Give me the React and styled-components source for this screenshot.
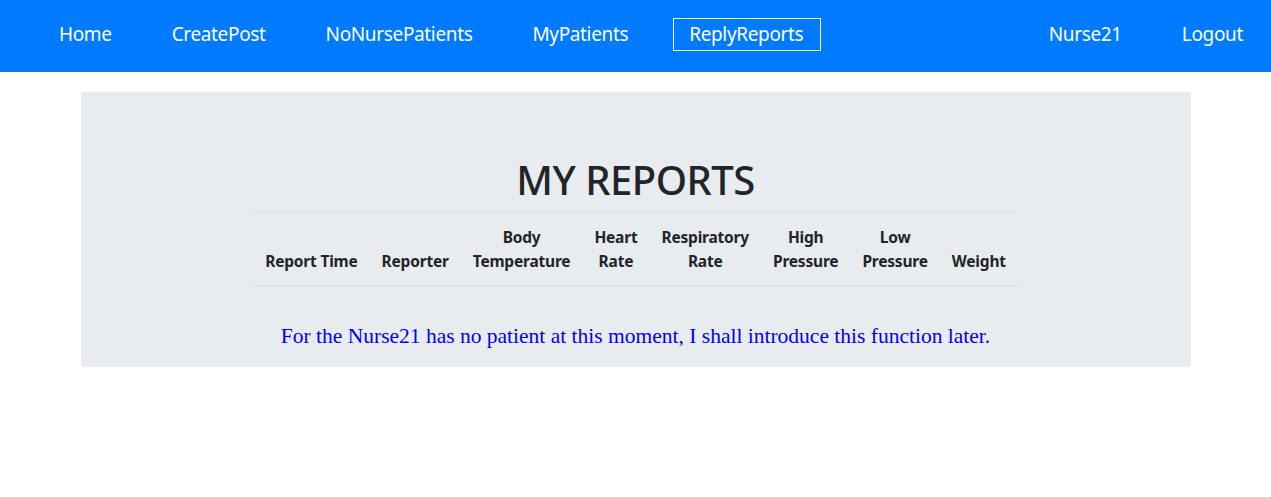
import React from "react";
import styled, { createGlobalStyle } from "styled-components";

const Global = createGlobalStyle`
  * { box-sizing: border-box; }
  body {
    margin: 0;
    font-family: "Noto Sans", "Open Sans", sans-serif;
    color: #212529;
    background: #fff;
  }
`;

const NavBar = styled.nav`
  height: 72px;
  background: #007bff;
  display: flex;
  align-items: center;
  padding: 0 0 3px 29px;
`;

const NavGroup = styled.div`
  display: flex;
  align-items: center;
  margin-left: ${(p) => (p.$right ? "auto" : "0")};
  margin-right: ${(p) => (p.$right ? "-2px" : "0")};
`;

const NavLink = styled.a`
  display: block;
  color: #fff;
  font-size: 19px;
  line-height: 31px;
  padding: 0 ${(p) => (p.$active ? "15px" : "16px")};
  margin: 0 13px 0 ${(p) => (p.$active ? "15px" : "13px")};
  text-decoration: none;
  border: 1px solid ${(p) => (p.$active ? "#fff" : "transparent")};
  letter-spacing: -0.35px;
  min-width: ${(p) => (p.$active ? "148px" : "0")};
`;

const Container = styled.main`
  max-width: 1110px;
  margin: 20px auto 0;
`;

const Jumbotron = styled.section`
  background: #e9ecef;
  border-radius: 4px;
  padding: 64px 32px 16px;
  display: flex;
  flex-direction: column;
  align-items: center;
`;

const Title = styled.h1`
  margin: 0 0 8px;
  font-size: 40px;
  line-height: 48px;
  font-weight: 500;
  letter-spacing: -0.5px;
`;

const Table = styled.table`
  border-collapse: collapse;
  margin-bottom: 34px;
`;

const Th = styled.th`
  padding: 12px;
  font-size: 15.5px;
  line-height: 24px;
  font-weight: 700;
  text-align: center;
  vertical-align: bottom;
  border-top: 1px solid #dee2e6;
  border-bottom: 2px solid #dee2e6;
  letter-spacing: -0.2px;
  white-space: nowrap;
`;

const Message = styled.p`
  margin: 0;
  font-family: "Liberation Serif", "Times New Roman", serif;
  font-size: 21.5px;
  line-height: 30px;
  color: #0000ff;
  text-align: center;
`;

const left = ["Home", "CreatePost", "NoNursePatients", "MyPatients", "ReplyReports"];
const right = ["Nurse21", "Logout"];
const heads = [
  ["Report Time"],
  ["Reporter"],
  ["Body", "Temperature"],
  ["Heart", "Rate"],
  ["Respiratory", "Rate"],
  ["High", "Pressure"],
  ["Low", "Pressure"],
  ["Weight"],
];

export default function App() {
  return (
    <>
      <Global />
      <NavBar>
        <NavGroup>
          {left.map((l) => (
            <NavLink key={l} href="#" $active={l === "ReplyReports"}>
              {l}
            </NavLink>
          ))}
        </NavGroup>
        <NavGroup $right>
          {right.map((l) => (
            <NavLink key={l} href="#">
              {l}
            </NavLink>
          ))}
        </NavGroup>
      </NavBar>
      <Container>
        <Jumbotron>
          <Title>MY REPORTS</Title>
          <Table>
            <thead>
              <tr>
                {heads.map((h) => (
                  <Th key={h.join(" ")}>
                    {h.map((part, i) => (
                      <React.Fragment key={part}>
                        {i > 0 && <br />}
                        {part}
                      </React.Fragment>
                    ))}
                  </Th>
                ))}
              </tr>
            </thead>
          </Table>
          <Message>
            For the Nurse21 has no patient at this moment, I shall introduce this function later.
          </Message>
        </Jumbotron>
      </Container>
    </>
  );
}
